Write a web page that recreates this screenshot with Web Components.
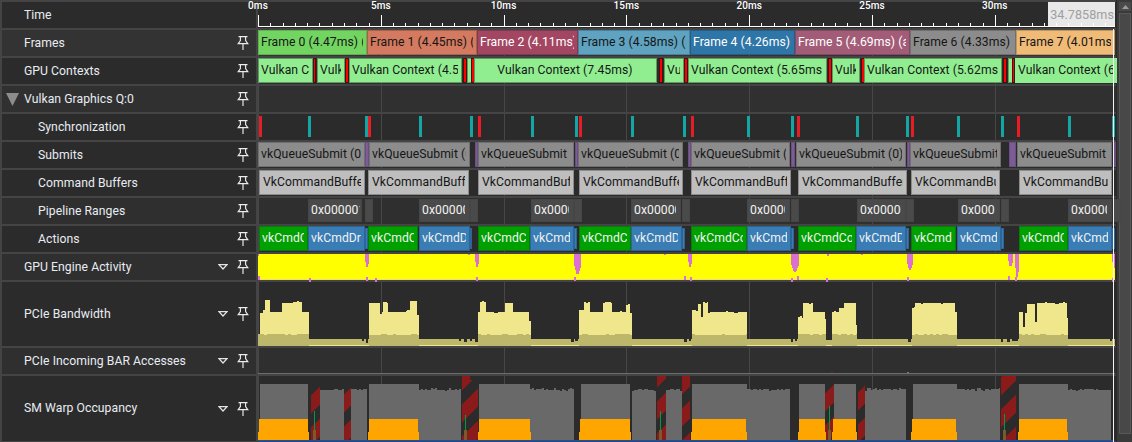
<!DOCTYPE html>
<html>
<head>
<meta charset="utf-8">
<title>Trace timeline</title>
<style>
    html, body { margin: 0; height: 442px; overflow: hidden; background: #444; }
    body { font: 12.2px Roboto, "Liberation Sans", sans-serif; letter-spacing: .05px; }
</style>
</head>
<body>
<trace-view>
    <trace-row label="Time" plain style="--row-h:26px"><time-ruler></time-ruler></trace-row>

    <trace-row label="Frames" bare shade="#333">
        <trace-span from="258" to="367" fill="#72d562" edge="#5fb04f">Frame 0 (4.47ms) (</trace-span>
        <trace-span from="367" to="477" fill="#d37a60" edge="#a8604c">Frame 1 (4.45ms) (</trace-span>
        <trace-span from="477" to="578" fill="#a34662" edge="#7f3a50" ink="#fff">Frame 2 (4.11ms)</trace-span>
        <trace-span from="578" to="690" fill="#5fa3c0" edge="#4a8098">Frame 3 (4.58ms) (a</trace-span>
        <trace-span from="690" to="795" fill="#2e75a8" edge="#255d85" ink="#fff">Frame 4 (4.26ms)</trace-span>
        <trace-span from="795" to="910" fill="#a35c78" edge="#824a60" ink="#fff">Frame 5 (4.69ms) (a</trace-span>
        <trace-span from="910" to="1016" fill="#8c8c8c" edge="#707070">Frame 6 (4.33ms)</trace-span>
        <trace-span from="1016" to="1115" fill="#efbb76" edge="#bf965e">Frame 7 (4.01ms</trace-span>
    </trace-row>

    <trace-row label="GPU Contexts" bare>
        <trace-span from="258" to="313" fill="#90ee90" edge="#5f9a5f">Vulkan C</trace-span>
        <trace-span from="313" to="316" stall></trace-span>
        <trace-span from="317" to="345" fill="#90ee90" edge="#5f9a5f">Vulk</trace-span>
        <trace-span from="345" to="349" stall></trace-span>
        <trace-span from="349" to="462" fill="#90ee90" edge="#5f9a5f">Vulkan Context (4.5</trace-span>
        <trace-span from="463" to="467" stall></trace-span>
        <trace-span from="467" to="471" fill="#90ee90" edge="#5f9a5f"></trace-span>
        <trace-span from="471" to="475" stall></trace-span>
        <trace-span from="474" to="657" fill="#90ee90" edge="#5f9a5f" center>Vulkan Context (7.45ms)</trace-span>
        <trace-span from="659" to="663" stall></trace-span>
        <trace-span from="664" to="684" fill="#90ee90" edge="#5f9a5f">Vu</trace-span>
        <trace-span from="684" to="688" stall></trace-span>
        <trace-span from="688" to="827" fill="#90ee90" edge="#5f9a5f">Vulkan Context (5.65ms</trace-span>
        <trace-span from="828" to="832" stall></trace-span>
        <trace-span from="832" to="860" fill="#90ee90" edge="#5f9a5f">Vulk</trace-span>
        <trace-span from="861" to="865" stall></trace-span>
        <trace-span from="864" to="1002" fill="#90ee90" edge="#5f9a5f">Vulkan Context (5.62ms</trace-span>
        <trace-span from="1003" to="1007" stall></trace-span>
        <trace-span from="1008" to="1011" fill="#90ee90" edge="#5f9a5f"></trace-span>
        <trace-span from="1012" to="1015" stall></trace-span>
        <trace-span from="1015" to="1117" fill="#90ee90" edge="#90ee90">Vulkan Context (6</trace-span>
    </trace-row>

    <trace-row label="Vulkan Graphics Q:0" bare open shade="#303030"></trace-row>

    <trace-row label="Synchronization" bare sub><sync-marks></sync-marks></trace-row>

    <trace-row label="Submits" bare sub>
        <trace-span from="258" to="365" submit>vkQueueSubmit (0)</trace-span>
        <trace-span from="365" to="369" wait></trace-span>
        <trace-span from="369" to="470" submit>vkQueueSubmit (0</trace-span>
        <trace-span from="475" to="478" wait></trace-span>
        <trace-span from="478" to="574" submit>vkQueueSubmit (</trace-span>
        <trace-span from="575" to="578" wait></trace-span>
        <trace-span from="578" to="683" submit>vkQueueSubmit (0</trace-span>
        <trace-span from="688" to="691" wait></trace-span>
        <trace-span from="691" to="790" submit>vkQueueSubmit (</trace-span>
        <trace-span from="791" to="795" wait></trace-span>
        <trace-span from="796" to="906" submit>vkQueueSubmit (0)</trace-span>
        <trace-span from="907" to="910" wait></trace-span>
        <trace-span from="910" to="1001" submit>vkQueueSubmit</trace-span>
        <trace-span from="1009" to="1016" wait></trace-span>
        <trace-span from="1017" to="1112" submit>vkQueueSubmit</trace-span>
        <trace-span from="1114" to="1116" wait></trace-span>
    </trace-row>

    <trace-row label="Command Buffers" bare sub>
        <trace-span from="259" to="365" buffer>VkCommandBuffe</trace-span>
        <trace-span from="368" to="469" buffer>VkCommandBuff</trace-span>
        <trace-span from="478" to="574" buffer>VkCommandBuf</trace-span>
        <trace-span from="579" to="683" buffer>VkCommandBuffe</trace-span>
        <trace-span from="691" to="791" buffer>VkCommandBuff</trace-span>
        <trace-span from="798" to="907" buffer>VkCommandBuffer</trace-span>
        <trace-span from="911" to="1000" buffer>VkCommandBu</trace-span>
        <trace-span from="1019" to="1112" buffer>VkCommandBu</trace-span>
    </trace-row>

    <trace-row label="Pipeline Ranges" bare sub shade="#2f2f2f" style="--lane-top:1px;--lane-bottom:2px">
        <trace-span from="308" to="362" pipeline style="padding-right:1px">0x000001</trace-span>
        <trace-span from="365" to="368" pipeline></trace-span>
        <trace-span from="419" to="470" pipeline>0x000000</trace-span>
        <trace-span from="470" to="472" pipeline></trace-span>
        <trace-span from="531" to="574" pipeline>0x00000</trace-span>
        <trace-span from="574" to="577" pipeline></trace-span>
        <trace-span from="631" to="681" pipeline>0x000000</trace-span>
        <trace-span from="682" to="685" pipeline></trace-span>
        <trace-span from="747" to="790" pipeline>0x00000</trace-span>
        <trace-span from="791" to="794" pipeline></trace-span>
        <trace-span from="857" to="906" pipeline>0x000000</trace-span>
        <trace-span from="906" to="909" pipeline></trace-span>
        <trace-span from="958" to="1000" pipeline>0x00000</trace-span>
        <trace-span from="1001" to="1004" pipeline></trace-span>
        <trace-span from="1068" to="1112" pipeline>0x00000</trace-span>
        <trace-span from="1113" to="1115" pipeline></trace-span>
    </trace-row>

    <trace-row label="Actions" bare sub>
        <trace-span from="259" to="308" copy>vkCmdC</trace-span>
        <trace-span from="308" to="365" draw>vkCmdDr</trace-span>
        <trace-span from="365" to="368" draw tail></trace-span>
        <trace-span from="368" to="418" copy>vkCmdC</trace-span>
        <trace-span from="419" to="470" draw>vkCmdD</trace-span>
        <trace-span from="470" to="472" draw tail></trace-span>
        <trace-span from="478" to="530" copy>vkCmdC</trace-span>
        <trace-span from="530" to="574" draw>vkCmd</trace-span>
        <trace-span from="574" to="577" draw tail></trace-span>
        <trace-span from="579" to="631" copy>vkCmdC</trace-span>
        <trace-span from="631" to="682" draw>vkCmdD</trace-span>
        <trace-span from="682" to="685" draw tail></trace-span>
        <trace-span from="691" to="747" copy>vkCmdCo</trace-span>
        <trace-span from="747" to="791" draw>vkCmd</trace-span>
        <trace-span from="791" to="794" draw tail></trace-span>
        <trace-span from="798" to="856" copy>vkCmdCo</trace-span>
        <trace-span from="856" to="906" draw>vkCmdD</trace-span>
        <trace-span from="906" to="909" draw tail></trace-span>
        <trace-span from="911" to="956" copy>vkCmd</trace-span>
        <trace-span from="957" to="1001" draw>vkCmd</trace-span>
        <trace-span from="1001" to="1004" draw tail></trace-span>
        <trace-span from="1019" to="1068" copy>vkCmdC</trace-span>
        <trace-span from="1068" to="1112" draw>vkCmd</trace-span>
        <trace-span from="1112" to="1115" draw tail></trace-span>
    </trace-row>

    <trace-row label="GPU Engine Activity" menu shade="#2f2f2f"><engine-activity></engine-activity></trace-row>
    <trace-row label="PCIe Bandwidth" menu style="--row-h:64px"><pcie-bandwidth></pcie-bandwidth></trace-row>
    <trace-row label="PCIe Incoming BAR Accesses" menu shade="#2f2f2f"><bar-accesses></bar-accesses></trace-row>
    <trace-row label="SM Warp Occupancy" menu style="--row-h:65px"><warp-occupancy></warp-occupancy></trace-row>
</trace-view>

<script>
const LANE_LEFT = 258;

const PIN_ICON = `<svg width="12" height="14" viewBox="0 0 12 14" fill="none" stroke="#ececec" stroke-width="1.15">
    <path d="M1.5 .6H10.5M3.4 .6V4.5L1.2 7.6H10.8L8.6 4.5V.6M6 7.6V14"/></svg>`;

// stable pseudo noise so the charts come out the same every time
const wobble = (x) => {
    const s = Math.sin(x * 12.9898) * 43758.5453;
    return s - Math.floor(s);
};

function steppedPath(pieces, floor, amp, step = 2) {
    let d = `M${pieces[0][0]} ${floor}`;
    for (const [x0, x1, y] of pieces) {
        for (let x = x0; x < x1; x += step) {
            const top = Math.round(y + (wobble(x) - .5) * amp);
            d += `V${top}H${Math.min(x + step, x1)}`;
        }
    }
    return d + `V${floor}Z`;
}

class TraceView extends HTMLElement {
    constructor() {
        super();
        this.attachShadow({ mode: 'open' });
    }

    connectedCallback() {
        this.shadowRoot.innerHTML = `
            <style>
                :host {
                    display: grid;
                    grid-template-columns: 1fr 16px;
                    height: 442px;
                    box-sizing: border-box;
                    position: relative;
                }
                .rows {
                    display: flex;
                    flex-direction: column;
                    gap: 2px;
                    padding: 2px 0 1px 2px;
                    min-width: 0;
                }
                .cursor {
                    position: absolute;
                    left: 1113px;
                    top: 29px;
                    bottom: 0;
                    width: 1px;
                    background: #f4f4f4;
                }
            </style>
            <div class="rows"><slot></slot></div>
            <scroll-bar></scroll-bar>
            <div class="cursor"></div>
        `;
    }
}

class TraceRow extends HTMLElement {
    constructor() {
        super();
        this.attachShadow({ mode: 'open' });
    }

    connectedCallback() {
        const shade = this.getAttribute('shade') || '#2b2b2b';
        const hasPin = !this.hasAttribute('plain');
        this.shadowRoot.innerHTML = `
            <style>
                :host {
                    display: grid;
                    grid-template-columns: 254px 1fr;
                    column-gap: 2px;
                    height: var(--row-h, 26px);
                    color: #e8ecf2;
                }
                .label {
                    display: flex;
                    align-items: center;
                    padding: 0 7px 0 4px;
                    background: ${shade};
                }
                .twisty { flex: none; width: 18px; display: flex; }
                .name { flex: 1; white-space: nowrap; margin-top: -1px; }
                :host([sub]) .name { margin-left: 14px; }
                .menu { margin-right: 9px; display: flex; }
                .pin { display: flex; }
                .lane {
                    position: relative;
                    background-color: ${shade};
                    background-image: repeating-linear-gradient(90deg, #474747 0 1px, transparent 1px 122.8px);
                }
                :host([plain]) .lane { background-image: none; }
            </style>
            <div class="label">
                <div class="twisty">${this.hasAttribute('open')
                    ? '<svg width="13" height="13" viewBox="0 0 13 13"><path d="M0 0H13L6.5 13Z" fill="#8c8c8c"/></svg>' : ''}</div>
                <div class="name">${this.getAttribute('label')}</div>
                ${this.hasAttribute('menu')
                    ? '<div class="menu"><svg width="10" height="6" viewBox="0 0 10 6"><path d="M1 .7H9L5 5Z" fill="none" stroke="#e4e4e4" stroke-width="1.2"/></svg></div>' : ''}
                ${hasPin ? `<div class="pin">${PIN_ICON}</div>` : ''}
            </div>
            <div class="lane"><slot></slot></div>
        `;
    }
}

class TimeRuler extends HTMLElement {
    constructor() {
        super();
        this.attachShadow({ mode: 'open' });
    }

    connectedCallback() {
        let ticks = '';
        let labels = '';
        for (let i = 0; i * 12.28 < 857; i++) {
            const x = Math.round(i * 12.28) + .5;
            const major = i % 10 === 0;
            ticks += `<path d="M${x} ${major ? 13 : 21}V25"/>`;
            if (major) {
                labels += `<span class="mark" style="left:${i * 12.28}px">${i / 2}ms</span>`;
            }
        }
        this.shadowRoot.innerHTML = `
            <style>
                :host { display: block; position: absolute; inset: 0; }
                svg { position: absolute; inset: 0; }
                .readout {
                    position: absolute;
                    right: 1px;
                    top: 0;
                    bottom: 1px;
                    width: 67px;
                    background: #e8e8e8;
                    color: #a0a0a0;
                    font-size: 12.6px;
                    display: flex;
                    align-items: center;
                    justify-content: flex-end;
                    padding-right: 1px;
                    box-sizing: border-box;
                }
                .mark {
                    position: absolute;
                    top: -2px;
                    transform: translateX(-50%);
                    color: #fff;
                    font-size: 10px;
                    font-weight: 500;
                    letter-spacing: .1px;
                }
            </style>
            <div class="readout">34.7858ms</div>
            <svg width="858" height="26" viewBox="0 0 858 26" fill="none" stroke="#fff">
                <path d="M0 24.5H857"/>${ticks}
            </svg>
            ${labels}
        `;
    }
}

class TraceSpan extends HTMLElement {
    constructor() {
        super();
        this.attachShadow({ mode: 'open' });
    }

    connectedCallback() {
        const from = +this.getAttribute('from');
        const to = +this.getAttribute('to');
        this.style.left = `${from - LANE_LEFT}px`;
        this.style.width = `${to - from}px`;
        this.shadowRoot.innerHTML = `
            <style>
                :host {
                    position: absolute;
                    top: var(--lane-top, 0);
                    bottom: var(--lane-bottom, 1px);
                    box-sizing: border-box;
                    display: flex;
                    align-items: center;
                    padding: 0 3px 1px 2px;
                    border: 1px solid ${this.getAttribute('edge') || '#666'};
                    background: ${this.getAttribute('fill') || '#888'};
                    color: ${this.getAttribute('ink') || '#161616'};
                }
                :host([stall]) { background: #f00; border-color: #3a1616; padding: 0; }
                :host([wait]) { background: #7d5b96; border-color: #6a4f80; padding: 0; }
                :host([submit]) { background: #8c8c8c; border-color: #707070; }
                :host([buffer]) { background: #bebebe; border-color: #8c8c8c; padding-left: 3px; }
                :host([pipeline]) { background: #4a4a4a; border-color: #464646; color: #f2f2f2; padding-right: 4px; }
                :host([copy]) { background: #00a000; border-color: #0a7a0a; color: #f0f0f0; }
                :host([draw]) { background: #3a7db5; border-color: #2d6596; color: #f0f0f0; }
                :host([tail]) { top: 2px; bottom: 3px; padding: 0; }
                .text { flex: 1; min-width: 0; overflow: hidden; white-space: nowrap; margin-top: -1px; }
                :host([center]) .text { text-align: center; }
            </style>
            <div class="text"><slot></slot></div>
        `;
    }
}

// base for the lanes drawn with SVG, in page coordinates
class ChartLane extends HTMLElement {
    constructor() {
        super();
        this.attachShadow({ mode: 'open' });
    }

    connectedCallback() {
        const top = this.constructor.top;
        const height = this.constructor.height;
        this.shadowRoot.innerHTML = `
            <style>
                :host { display: block; position: absolute; inset: 0; }
                svg { display: block; overflow: visible; }
            </style>
            <svg width="858" height="${height}" viewBox="${LANE_LEFT} ${top} 858 ${height}" shape-rendering="crispEdges">
                ${this.draw()}
            </svg>
        `;
    }
}

class SyncMarks extends ChartLane {
    static top = 114;
    static height = 26;

    draw() {
        const red = [259, 368, 478, 579, 691, 796.5, 910.5, 1017];
        const teal = [308, 365, 419, 470, 531, 575, 631, 683, 747, 791, 856, 906, 957, 1001, 1068, 1112];
        const bar = (x, color) => `<rect x="${x}" y="116" width="3" height="21" fill="${color}"/>`;
        return teal.map((x) => bar(x, '#14a5a5')).join('') + red.map((x) => bar(x, '#e81c24')).join('');
    }
}

class EngineActivity extends ChartLane {
    static top = 254;
    static height = 26;

    draw() {
        const spikes = [
            [365, 369, 267], [475, 479, 267], [574, 581, 274], [688, 692, 267], [791, 799, 272], [907, 913, 270],
            [1008, 1013, 266], [1015, 1019, 277], [1112, 1115, 268],
            [468, 470, 255], [664, 666, 255], [827, 829, 256], [861, 863, 255], [258, 259, 256]
        ];
        const feet = [258, 309, 366, 375, 476, 574, 684, 690, 791, 797, 826, 907, 1008, 1015, 1112];
        let out = `<rect x="258" y="254" width="857" height="25" fill="#ff0"/>`;
        out += `<rect x="258" y="279" width="857" height="1" fill="#f4e070"/>`;
        for (const [a, b, y] of spikes) {
            const mid = (a + b) / 2;
            const knee = 254 + (y - 254) * .6;
            out += `<path d="M${a} 254H${b}V${knee}L${mid + 1} ${y}H${mid - 1}L${a + .5} ${knee}Z" fill="#da70d6"/>`;
        }
        for (const x of feet) {
            out += `<rect x="${x}" y="${276 + Math.round(wobble(x) * 2)}" width="2" height="4" fill="#da70d6"/>`;
        }
        return out;
    }
}

class PcieBandwidth extends ChartLane {
    static top = 282;
    static height = 64;

    draw() {
        const bursts = [
            [[258, 260, 340], [260, 263, 313], [263, 265, 309], [265, 270, 300], [270, 282, 312], [283, 293, 303], [293, 302, 302], [302, 309, 312]],
            [[369, 380, 303], [380, 383, 313], [383, 388, 302], [388, 407, 312], [407, 410, 310], [410, 417, 301], [417, 419, 315]],
            [[478, 480, 312], [480, 486, 302], [486, 505, 312], [505, 513, 303], [513, 529, 312], [529, 531, 320]],
            [[579, 584, 310], [584, 590, 302], [590, 603, 312], [603, 612, 302], [612, 626, 312], [626, 630, 304], [630, 632, 313]],
            [[692, 698, 310], [698, 701, 304], [701, 703, 317], [703, 708, 302], [708, 747, 312]],
            [[798, 803, 317], [803, 813, 303], [813, 825, 312], [825, 826, 320]],
            [[832, 839, 312], [839, 844, 308], [844, 856, 303], [856, 857, 325]],
            [[912, 915, 308], [915, 955, 303], [955, 957, 312]],
            [[1019, 1023, 312], [1023, 1025, 328], [1025, 1027, 313], [1027, 1035, 304], [1035, 1037, 322], [1037, 1067, 303], [1067, 1068, 318]]
        ];
        const notches = [
            [459, 461, 341], [464, 467, 342], [470, 472, 341], [475, 478, 342], [366, 368, 343], [362, 364, 341],
            [571, 574, 342], [575, 578, 341], [684, 687, 342], [689, 691, 341], [791, 793, 342], [795, 797, 341],
            [826, 832, 340], [908, 911, 342], [1001, 1003, 342], [1007, 1010, 342], [1012, 1018, 341], [1110, 1112, 341]
        ];
        let out = `<rect x="258" y="339" width="857" height="6" fill="#bdb76b"/>`;
        out += `<rect x="258" y="345" width="857" height="1" fill="#f0e68c"/>`;
        for (const [a, b, y] of notches) {
            out += `<rect x="${a}" y="339" width="${b - a}" height="${y - 339}" fill="#2b2b2b"/>`;
        }
        for (const pieces of bursts) {
            const a = pieces[0][0];
            const b = pieces[pieces.length - 1][1];
            out += `<path d="${steppedPath(pieces, 346, 1.2)}" fill="#f0e68c"/>`;
            out += `<path d="${steppedPath([[a, b, 334.5]], 346, 1.2, 3)}" fill="#bdb76b"/>`;
        }
        return out;
    }
}

class BarAccesses extends ChartLane {
    static top = 348;
    static height = 26;

    draw() {
        return `<rect x="258" y="373" width="857" height="1" fill="#6c6c6c"/>
            <rect x="831" y="372" width="2" height="1" fill="#8b1a1a"/>
            <rect x="907" y="372" width="2" height="1" fill="#7a7a7a"/>`;
    }
}

class WarpOccupancy extends ChartLane {
    static top = 376;
    static height = 65;

    // red stripes follow x + y: red from 738 for 18 px, repeating every 32
    hatchColumn(x, top) {
        let out = `<rect x="${x}" y="${top}" width="1" height="${441 - top}" fill="#2b2b2b"/>`;
        for (let y = top; y < 441; y++) {
            const phase = (((x + y - 738) % 32) + 32) % 32;
            if (phase < 18) {
                out += `<rect x="${x}" y="${y}" width="1" height="1" fill="#8b1a1a"/>`;
            }
        }
        return out;
    }

    draw() {
        const upper = [[260, 308], [369, 419], [479, 530], [581, 630], [692, 747], [799, 825], [834, 856], [913, 957], [1019, 1068]];
        const lower = [[320, 344], [351, 367], [419, 461], [530, 574], [632, 656], [666, 682], [747, 790], [865, 906], [957, 1000], [1068, 1111]];
        const hatch = [[311, 320, 385], [344, 351, 386], [462, 470, 376], [470, 478, 380], [657, 666, 376], [682, 690, 376], [825, 834, 383], [858, 865, 384], [1001, 1016, 376]];
        const orange = [[259, 308], [369, 418], [479, 530], [580, 630], [692, 746], [799, 825], [833, 856], [912, 956], [1019, 1067]];
        const sparks = [[314, 411], [465, 415], [660, 411], [829, 406], [1004, 414]];
        let out = '';
        for (const [a, b] of upper) {
            out += `<path d="${steppedPath([[a, b, 384]], 440, .6, 4)}" fill="#696969"/>`;
        }
        for (const [a, b] of lower) {
            out += `<path d="${steppedPath([[a, b, 389.5]], 440, 2.4)}" fill="#696969"/>`;
        }
        for (const [a, b, y] of hatch) {
            for (let x = a; x < b; x++) {
                out += this.hatchColumn(x, y);
            }
        }
        for (const [a, b] of orange) {
            out += `<rect x="${a}" y="419" width="${b - a}" height="21" fill="#ffa500"/>`;
            out += `<rect x="${a - 1}" y="432" width="${b - a + 2}" height="8" fill="#ffa500"/>`;
        }
        for (const [x, y] of sparks) {
            out += `<rect x="${x}" y="${y}" width="1" height="${440 - y}" fill="#00994c"/>`;
            out += `<rect x="${x - 1}" y="430" width="3" height="10" fill="#7a5a28"/>`;
        }
        out += `<rect x="258" y="440" width="855" height="1" fill="#0a52d4"/>`;
        return out;
    }
}

class ScrollBar extends HTMLElement {
    constructor() {
        super();
        this.attachShadow({ mode: 'open' });
    }

    connectedCallback() {
        this.shadowRoot.innerHTML = `
            <style>
                :host {
                    display: flex;
                    flex-direction: column;
                    gap: 2px;
                    padding: 2px 1px 8px 2px;
                    background: #3a3a3a;
                    box-sizing: border-box;
                    border-left: 1px solid #2b2b2b;
                }
                .button {
                    height: 9px;
                    background: #4a4a4a;
                    display: flex;
                    align-items: center;
                    justify-content: center;
                }
                .thumb {
                    flex: 1;
                    background: #484848;
                    border: 1px solid #585858;
                }
            </style>
            <div class="button"><svg width="7" height="4" viewBox="0 0 7 4"><path d="M0 4H7L3.5 0Z" fill="#9a9a9a"/></svg></div>
            <div class="thumb"></div>
        `;
    }
}

customElements.define('trace-view', TraceView);
customElements.define('trace-row', TraceRow);
customElements.define('time-ruler', TimeRuler);
customElements.define('trace-span', TraceSpan);
customElements.define('sync-marks', SyncMarks);
customElements.define('engine-activity', EngineActivity);
customElements.define('pcie-bandwidth', PcieBandwidth);
customElements.define('bar-accesses', BarAccesses);
customElements.define('warp-occupancy', WarpOccupancy);
customElements.define('scroll-bar', ScrollBar);
</script>
</body>
</html>
